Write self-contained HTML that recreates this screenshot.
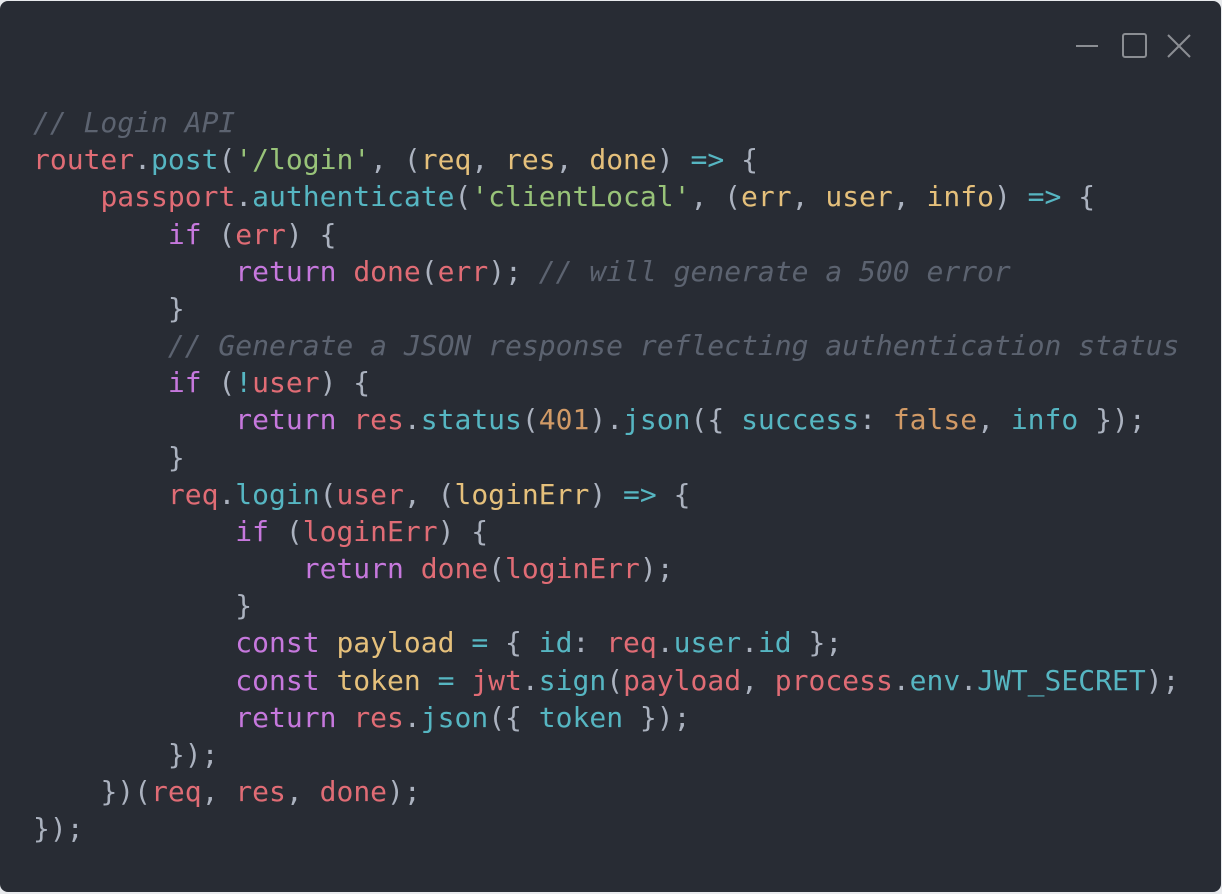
<!DOCTYPE html>
<html><head><meta charset="utf-8"><style>
html,body{margin:0;padding:0;background:#e8eaed;width:1222px;height:894px;overflow:hidden}
.win{position:absolute;left:0;top:1px;width:1221px;height:891px;background:#282c34;border-radius:8px}
pre{position:absolute;left:33px;top:103px;margin:0;font-family:"DejaVu Sans Mono","Liberation Mono",monospace;font-size:28px;line-height:37.17px;color:#abb2bf;tab-size:4}
.c{color:#5c6370;font-style:italic}.r{color:#e06c75}.b{color:#56b6c2}.g{color:#98c379}.y{color:#e5c07b}.p{color:#c678dd}.o{color:#d19a66}
</style></head><body><div class="win">
<svg style="position:absolute;left:0;top:0" width="1222" height="100">
<g stroke="#8b8e93" stroke-width="2" fill="none">
<line x1="1076" y1="45" x2="1098" y2="45"/>
<rect x="1123" y="33" width="23" height="23" rx="2"/>
<line x1="1168" y1="34" x2="1190" y2="56"/><line x1="1190" y1="34" x2="1168" y2="56"/>
</g></svg>
<pre><span class="c">// Login API</span>
<span class="r">router</span>.<span class="b">post</span>(<span class="g">'/login'</span>, (<span class="y">req</span>, <span class="y">res</span>, <span class="y">done</span>) <span class="b">=&gt;</span> {
	<span class="r">passport</span>.<span class="b">authenticate</span>(<span class="g">'clientLocal'</span>, (<span class="y">err</span>, <span class="y">user</span>, <span class="y">info</span>) <span class="b">=&gt;</span> {
		<span class="p">if</span> (<span class="r">err</span>) {
			<span class="p">return</span> <span class="r">done</span>(<span class="r">err</span>); <span class="c">// will generate a 500 error</span>
		}
		<span class="c">// Generate a JSON response reflecting authentication status</span>
		<span class="p">if</span> (<span class="b">!</span><span class="r">user</span>) {
			<span class="p">return</span> <span class="r">res</span>.<span class="b">status</span>(<span class="o">401</span>).<span class="b">json</span>({ <span class="b">success</span>: <span class="o">false</span>, <span class="b">info</span> });
		}
		<span class="r">req</span>.<span class="b">login</span>(<span class="r">user</span>, (<span class="y">loginErr</span>) <span class="b">=&gt;</span> {
			<span class="p">if</span> (<span class="r">loginErr</span>) {
				<span class="p">return</span> <span class="r">done</span>(<span class="r">loginErr</span>);
			}
			<span class="p">const</span> <span class="y">payload</span> <span class="b">=</span> { <span class="b">id</span>: <span class="r">req</span>.<span class="b">user</span>.<span class="b">id</span> };
			<span class="p">const</span> <span class="y">token</span> <span class="b">=</span> <span class="r">jwt</span>.<span class="b">sign</span>(<span class="r">payload</span>, <span class="r">process</span>.<span class="b">env</span>.<span class="b">JWT_SECRET</span>);
			<span class="p">return</span> <span class="r">res</span>.<span class="b">json</span>({ <span class="b">token</span> });
		});
	})(<span class="r">req</span>, <span class="r">res</span>, <span class="r">done</span>);
});</pre>
</div></body></html>
